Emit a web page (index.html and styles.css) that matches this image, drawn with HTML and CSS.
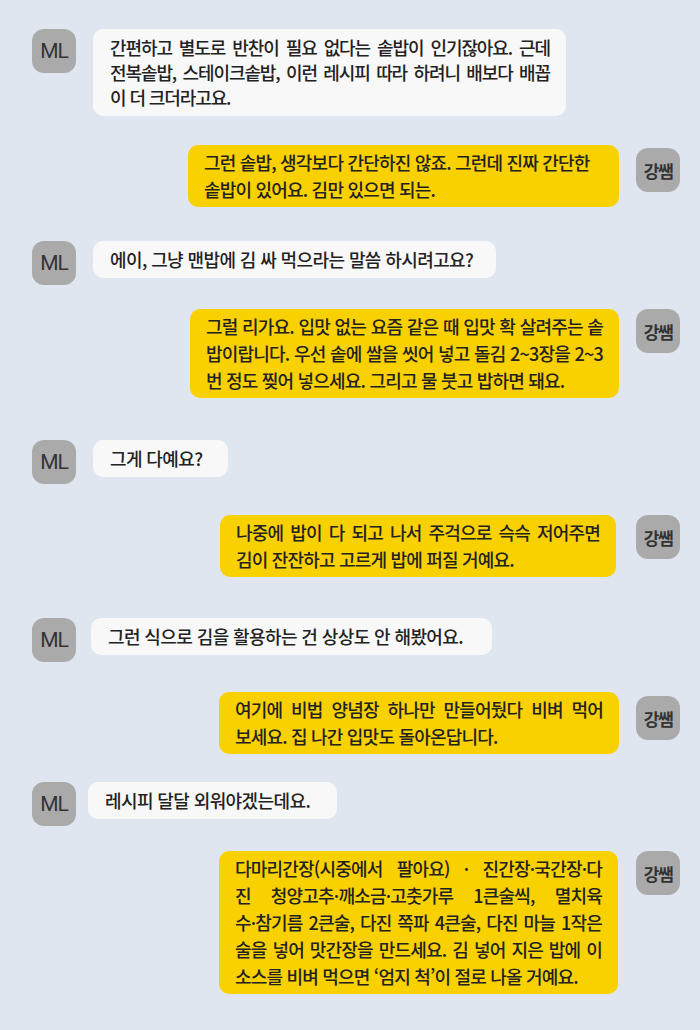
FILE: index.html
```html
<!DOCTYPE html>
<html lang="ko">
<head>
    <meta charset="UTF-8">
    <meta name="viewport" content="width=device-width, initial-scale=1.0">
    <title>김 솥밥 대화</title>
    <link rel="stylesheet" href="styles.css">
</head>
<body>
    <div class="chat">
        <div class="row left">
            <div class="avatar ml">ML</div>
            <div class="bubble white just">
                <span class="ln">간편하고 별도로 반찬이 필요 없다는 솥밥이 인기잖아요. 근데</span>
                <span class="ln">전복솥밥, 스테이크솥밥, 이런 레시피 따라 하려니 배보다 배꼽</span>
                <span class="ln">이 더 크더라고요.</span>
            </div>
        </div>

        <div class="row right">
            <div class="bubble yellow">
                <span class="ln">그런 솥밥, 생각보다 간단하진 않죠. 그런데 진짜 간단한</span>
                <span class="ln">솥밥이 있어요. 김만 있으면 되는.</span>
            </div>
            <div class="avatar ssam">강쌤</div>
        </div>

        <div class="row left">
            <div class="avatar ml">ML</div>
            <div class="bubble white">
                <span class="ln">에이, 그냥 맨밥에 김 싸 먹으라는 말씀 하시려고요?</span>
            </div>
        </div>

        <div class="row right">
            <div class="bubble yellow just">
                <span class="ln">그럴 리가요. 입맛 없는 요즘 같은 때 입맛 확 살려주는 솥</span>
                <span class="ln">밥이랍니다. 우선 솥에 쌀을 씻어 넣고 돌김 2~3장을 2~3</span>
                <span class="ln">번 정도 찢어 넣으세요. 그리고 물 붓고 밥하면 돼요.</span>
            </div>
            <div class="avatar ssam">강쌤</div>
        </div>

        <div class="row left">
            <div class="avatar ml">ML</div>
            <div class="bubble white">
                <span class="ln">그게 다예요?</span>
            </div>
        </div>

        <div class="row right">
            <div class="bubble yellow just">
                <span class="ln">나중에 밥이 다 되고 나서 주걱으로 슥슥 저어주면</span>
                <span class="ln">김이 잔잔하고 고르게 밥에 퍼질 거예요.</span>
            </div>
            <div class="avatar ssam">강쌤</div>
        </div>

        <div class="row left">
            <div class="avatar ml">ML</div>
            <div class="bubble white">
                <span class="ln">그런 식으로 김을 활용하는 건 상상도 안 해봤어요.</span>
            </div>
        </div>

        <div class="row right">
            <div class="bubble yellow just">
                <span class="ln">여기에 비법 양념장 하나만 만들어뒀다 비벼 먹어</span>
                <span class="ln">보세요. 집 나간 입맛도 돌아온답니다.</span>
            </div>
            <div class="avatar ssam">강쌤</div>
        </div>

        <div class="row left">
            <div class="avatar ml">ML</div>
            <div class="bubble white">
                <span class="ln">레시피 달달 외워야겠는데요.</span>
            </div>
        </div>

        <div class="row right">
            <div class="bubble yellow just">
                <span class="ln">다마리간장(시중에서 팔아요) · 진간장·국간장·다</span>
                <span class="ln">진 청양고추·깨소금·고춧가루 1큰술씩, 멸치육</span>
                <span class="ln">수·참기름 2큰술, 다진 쪽파 4큰술, 다진 마늘 1작은</span>
                <span class="ln">술을 넣어 맛간장을 만드세요. 김 넣어 지은 밥에 이</span>
                <span class="ln">소스를 비벼 먹으면 ‘엄지 척’이 절로 나올 거예요.</span>
            </div>
            <div class="avatar ssam">강쌤</div>
        </div>
    </div>
</body>
</html>
```

FILE: styles.css
```css
body {
    margin: 0;
    background-color: #dfe6ef;
    font-family: "Noto Sans CJK KR", sans-serif;
    color: #222;
}
.chat {
    padding: 29px 20px 30px 32px;
}
.row {
    display: flex;
    align-items: flex-start;
    gap: 17px;
}
.row.right {
    justify-content: flex-end;
}
.avatar {
    flex: none;
    width: 44px;
    height: 44px;
    border-radius: 12px;
    background-color: #aaa;
    color: #333;
    display: flex;
    align-items: center;
    justify-content: center;
}
.avatar.ml {
    font-family: Roboto, "Liberation Sans", sans-serif;
    font-size: 21px;
    letter-spacing: -1px;
}
.avatar.ssam {
    font-size: 17px;
    font-weight: bold;
    letter-spacing: -1.5px;
}
.bubble {
    box-sizing: border-box;
    border-radius: 10px;
    font-size: 18px;
    font-weight: 500;
}
.bubble.white {
    background-color: #f8f8f8;
    padding: 6px 16px 6px 17px;
    line-height: 25px;
    letter-spacing: -0.6px;
}
.bubble.yellow {
    background-color: #f9d000;
    padding: 4px 16px;
    line-height: 27px;
    letter-spacing: -0.8px;
}
.ln {
    display: block;
    white-space: nowrap;
}
.just .ln {
    text-align: justify;
    text-align-last: justify;
}
.just .ln:last-child {
    text-align-last: auto;
}

/* spacing and widths per message, taken from the original layout */
.row:nth-child(1) .bubble { width: 473px; letter-spacing: -1.1px; }
.row:nth-child(2) { margin-top: 29px; }
.row:nth-child(2) .bubble { width: 431px; }
.row:nth-child(2) .avatar { margin-top: 3px; }
.row:nth-child(3) { margin-top: 34px; }
.row:nth-child(3) .bubble { width: 403px; }
.row:nth-child(4) { margin-top: 24px; }
.row:nth-child(4) .bubble { width: 429px; }
.row:nth-child(5) { margin-top: 42px; }
.row:nth-child(5) .bubble { width: 135px; }
.row:nth-child(6) { margin-top: 31px; }
.row:nth-child(6) .bubble { width: 396px; margin-right: 3px; }
.row:nth-child(7) { margin-top: 41px; }
.row:nth-child(7) .bubble { width: 401px; margin-left: -2px; }
.row:nth-child(8) { margin-top: 30px; }
.row:nth-child(8) .bubble { width: 400px; }
.row:nth-child(8) .avatar { margin-top: 4px; }
.row:nth-child(9) { margin-top: 28px; }
.row:nth-child(9) .bubble { width: 249px; margin-left: -5px; }
.row:nth-child(10) { margin-top: 25px; }
.row:nth-child(10) .bubble { width: 399px; margin-right: 1px; }
```
